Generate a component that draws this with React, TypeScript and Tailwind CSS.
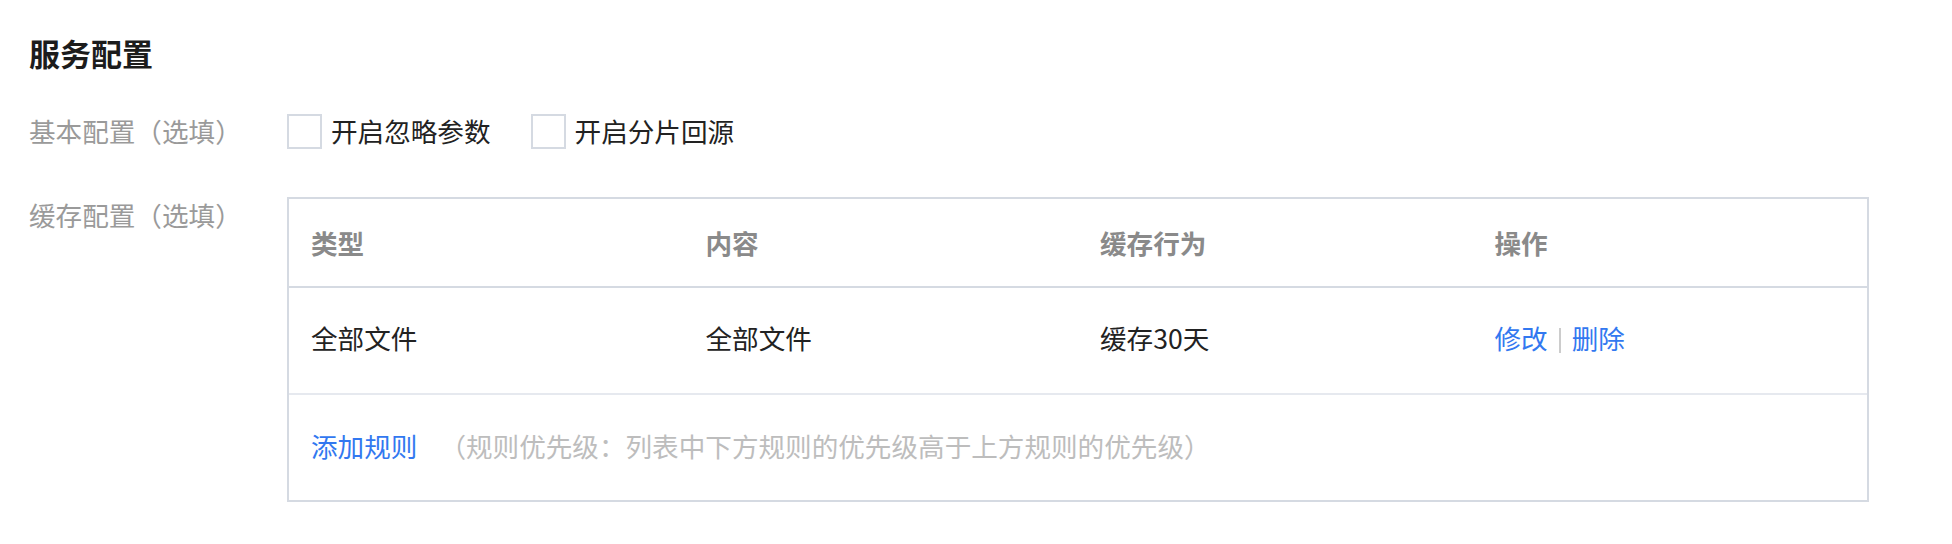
import React from "react";

const font = { fontFamily: '"Noto Sans CJK SC", "Noto Sans", sans-serif' };

function Checkbox({ label, last }: { label: string; last?: boolean }) {
  return (
    <div className={"flex items-center " + (last ? "" : "mr-[40px]")}>
      <span className="box-border block h-[35px] w-[35px] border-2 border-[#d5dae2] bg-white" />
      <span className="ml-[9px] text-[26.6px] leading-[36px] text-[#222]">{label}</span>
    </div>
  );
}

export default function App() {
  const cols = ["类型", "内容", "缓存行为", "操作"];
  return (
    <div className="min-h-[544px] w-[1952px] bg-white pl-[29px] pt-[33px]" style={font}>
      <h1 className="text-[31px] font-bold leading-[40px] text-[#1c1c1c]">服务配置</h1>

      <div className="mt-[40px] flex items-center">
        <div className="w-[258px] text-[26.6px] leading-[36px] text-[#9a9a9a]">基本配置（选填）</div>
        <Checkbox label="开启忽略参数" />
        <Checkbox label="开启分片回源" last />
      </div>

      <div className="mt-[48px] flex items-start">
        <div className="w-[258px] text-[26.6px] leading-[36px] text-[#9a9a9a]">缓存配置（选填）</div>
        <div className="box-border w-[1582px] border-2 border-[#d5dae2]">
          <div className="grid h-[89px] grid-cols-4 border-b-2 border-[#d5dae2] pt-[1px]">
            {cols.map((c) => (
              <div key={c} className="flex items-center pl-[22px] text-[26.6px] font-bold text-[#8a8a8a]">
                {c}
              </div>
            ))}
          </div>
          <div className="grid h-[107px] grid-cols-4 border-b-2 border-[#e6e9ef] pb-[5px] text-[26.6px] text-[#222]">
            <div className="flex items-center pl-[22px]">全部文件</div>
            <div className="flex items-center pl-[22px]">全部文件</div>
            <div className="flex items-center pl-[22px]">缓存30天</div>
            <div className="flex items-center pl-[22px]">
              <span className="text-[#3278f0]">修改</span>
              <span className="mx-[11px] mt-[4px] block h-[25px] w-[2px] bg-[#cccccc]" />
              <span className="text-[#3278f0]">删除</span>
            </div>
          </div>
          <div className="flex h-[105px] items-center pb-[3px] pl-[22px] text-[26.6px]">
            <span className="text-[#3278f0]">添加规则</span>
            <span className="ml-[22px] text-[#bdbdbd]">（规则优先级：列表中下方规则的优先级高于上方规则的优先级）</span>
          </div>
        </div>
      </div>
    </div>
  );
}
